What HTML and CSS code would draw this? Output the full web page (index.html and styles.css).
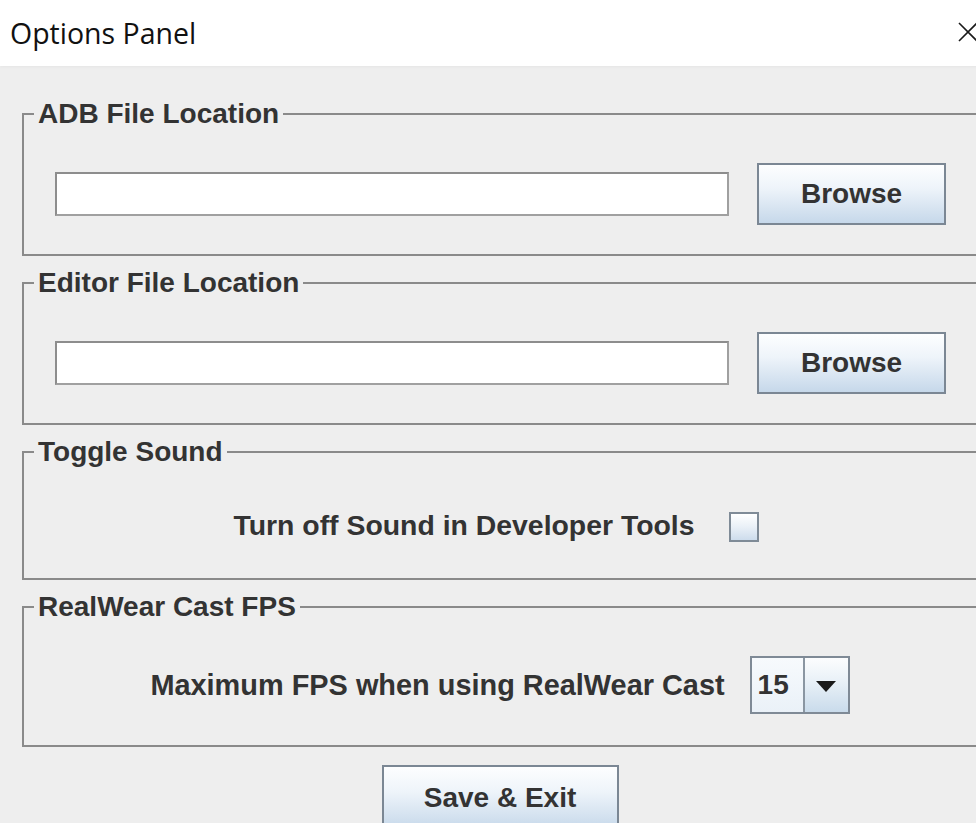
FILE: index.html
```html
<!DOCTYPE html>
<html lang="en">
<head>
<meta charset="utf-8">
<title>Options Panel</title>
<link rel="stylesheet" href="styles.css">
</head>
<body>
<div class="dialog">
  <header class="titlebar">
    <span class="title">Options Panel</span>
    <svg class="close" width="20" height="20" viewBox="0 0 20 20" aria-label="Close">
      <path d="M1 1 L19 19 M19 1 L1 19" stroke="#1a1a1a" stroke-width="1.6" fill="none"/>
    </svg>
  </header>

  <main class="content">
    <fieldset class="group">
      <legend class="group-title">ADB File Location</legend>
      <div class="file-row">
        <input class="path" type="text" value="">
        <button class="btn browse" type="button">Browse</button>
      </div>
    </fieldset>

    <fieldset class="group">
      <legend class="group-title">Editor File Location</legend>
      <div class="file-row">
        <input class="path" type="text" value="">
        <button class="btn browse" type="button">Browse</button>
      </div>
    </fieldset>

    <fieldset class="group">
      <legend class="group-title">Toggle Sound</legend>
      <div class="option-row sound-row">
        <span class="label">Turn off Sound in Developer Tools</span>
        <span class="checkbox" role="checkbox" aria-checked="false"></span>
      </div>
    </fieldset>

    <fieldset class="group">
      <legend class="group-title">RealWear Cast FPS</legend>
      <div class="option-row fps-row">
        <span class="label fps-label">Maximum FPS when using RealWear Cast</span>
        <div class="combo">
          <span class="combo-value">15</span>
          <span class="combo-arrow">
            <svg width="20" height="11" viewBox="0 0 20 11"><path d="M0 0 H20 L10 11 Z" fill="#1a1a1a"/></svg>
          </span>
        </div>
      </div>
    </fieldset>

    <div class="actions">
      <button class="btn save" type="button">Save &amp; Exit</button>
    </div>
  </main>
</div>
</body>
</html>
```

FILE: styles.css
```css
html, body {
  margin: 0;
  padding: 0;
  overflow: hidden;
  background: #eeeeee;
}

.dialog {
  width: 1000px;
  font-family: "Liberation Sans", Arial, sans-serif;
  color: #333333;
}

/* window caption */
.titlebar {
  height: 66px;
  background: #ffffff;
  display: flex;
  align-items: center;
  justify-content: space-between;
  padding: 0 22px 0 10px;
  box-sizing: border-box;
  box-shadow: 0 1px 3px rgba(0, 0, 0, 0.04);
}

.title {
  font-family: "Open Sans", "Noto Sans", sans-serif;
  font-size: 28.5px;
  color: #111111;
  margin-top: 0;
}

.close {
  display: block;
  margin-top: -2px;
}

.content {
  padding: 32px 22px 0 22px;
  display: flex;
  flex-direction: column;
  gap: 11px;
}

/* titled borders */
.group {
  margin: 0;
  padding: 0;
  border: 2px solid #8a8a8a;
  min-width: 0;
}

.group-title {
  margin-left: 10px;
  padding: 0 4px;
  font-size: 28px;
  font-weight: bold;
  line-height: 32px;
  color: #333333;
}

.file-row {
  display: flex;
  align-items: center;
  gap: 28px;
  padding: 33px 30px 29px 31px;
}

.path {
  flex: 1;
  height: 44px;
  box-sizing: border-box;
  margin: 0;
  padding: 0 6px;
  border: 2px solid #8d8d8d;
  border-right-color: #a0a0a0;
  border-bottom-color: #a0a0a0;
  background: #ffffff;
  outline: none;
  font: inherit;
}

.btn {
  box-sizing: border-box;
  margin: 0;
  padding: 0;
  border: 2px solid #7b8794;
  background: linear-gradient(to bottom, #fdfeff 0%, #eef4fa 40%, #c6d8ea 100%);
  font-family: "Liberation Sans", Arial, sans-serif;
  font-size: 28px;
  font-weight: bold;
  color: #333333;
  cursor: pointer;
}

.browse {
  width: 189px;
  height: 62px;
}

.option-row {
  display: flex;
  justify-content: center;
  align-items: center;
}

.label {
  font-size: 28.4px;
  font-weight: bold;
  line-height: 32px;
  color: #333333;
}

.fps-label {
  font-size: 28.9px;
}

.sound-row {
  gap: 34px;
  padding: 41px 8px 37px 0;
  height: 32px;
}

.checkbox {
  width: 30px;
  height: 30px;
  box-sizing: border-box;
  border: 2px solid #7f8b97;
  background: linear-gradient(to bottom, #ffffff 0%, #e9f0f7 50%, #cddcec 100%);
  margin-top: 4px;
}

.fps-row {
  gap: 25px;
  padding: 33px 0 31px 0;
}

.combo {
  display: flex;
  width: 100px;
  height: 58px;
  box-sizing: border-box;
  border: 2px solid #7f8a96;
}

.combo-value {
  width: 53px;
  display: flex;
  align-items: center;
  padding-left: 6px;
  box-sizing: border-box;
  font-size: 28px;
  font-weight: bold;
  color: #333333;
  background: linear-gradient(to bottom, #f7fafd 0%, #eaf1f8 100%);
  border-right: 2px solid #8a96a2;
}

.combo-arrow {
  flex: 1;
  display: flex;
  align-items: center;
  justify-content: center;
  background: linear-gradient(to bottom, #fcfdfe 0%, #e8f0f7 45%, #c9dbeb 100%);
}

.combo-arrow svg {
  display: block;
  margin-top: 2px;
}

.actions {
  display: flex;
  justify-content: center;
  padding-top: 7px;
  padding-left: 0;
}

.save {
  width: 237px;
  height: 66px;
}
```
